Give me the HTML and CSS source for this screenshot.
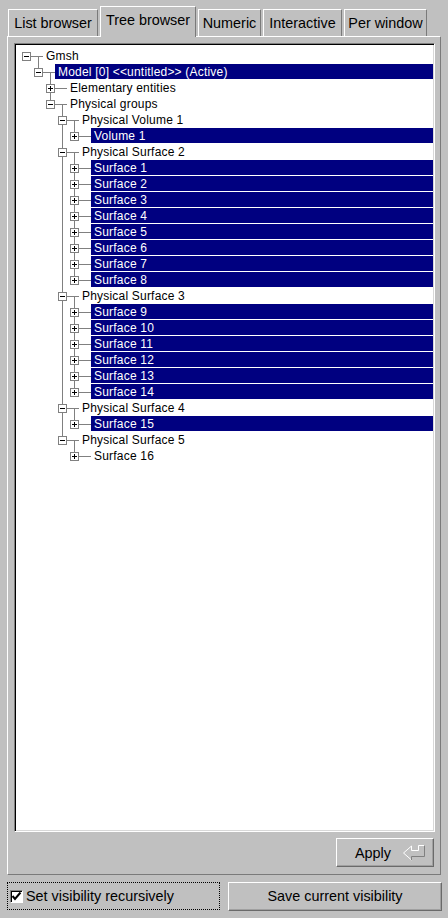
FILE: index.html
```html
<!DOCTYPE html>
<html>
<head>
<meta charset="utf-8">
<link rel="stylesheet" href="styles.css">
</head>
<body>
<div class="win">
  <div class="tabbar">
    <div class="tab t1">List browser</div>
    <div class="tab t2 active">Tree browser</div>
    <div class="tab t3">Numeric</div>
    <div class="tab t4">Interactive</div>
    <div class="tab t5">Per window</div>
  </div>
  <div class="panel">
    <div class="treebox">
      <ul class="tree">
        <li class="last">
          <div class="row open"><span class="tog minus"></span><span class="hl"></span><span class="lbl">Gmsh</span></div>
          <ul>
            <li class="last">
              <div class="row open"><span class="tog minus"></span><span class="hl"></span><span class="lbl sel">Model [0] &lt;&lt;untitled&gt;&gt; (Active)</span></div>
              <ul>
                <li>
                  <div class="row"><span class="tog plus"></span><span class="hl"></span><span class="lbl">Elementary entities</span></div>
                </li>
                <li class="last">
                  <div class="row open"><span class="tog minus"></span><span class="hl"></span><span class="lbl">Physical groups</span></div>
                  <ul>
                    <li>
                      <div class="row open"><span class="tog minus"></span><span class="hl"></span><span class="lbl">Physical Volume 1</span></div>
                      <ul>
                        <li class="last"><div class="row"><span class="tog plus"></span><span class="hl"></span><span class="lbl sel">Volume 1</span></div></li>
                      </ul>
                    </li>
                    <li>
                      <div class="row open"><span class="tog minus"></span><span class="hl"></span><span class="lbl">Physical Surface 2</span></div>
                      <ul>
                        <li><div class="row"><span class="tog plus"></span><span class="hl"></span><span class="lbl sel">Surface 1</span></div></li>
                        <li><div class="row"><span class="tog plus"></span><span class="hl"></span><span class="lbl sel">Surface 2</span></div></li>
                        <li><div class="row"><span class="tog plus"></span><span class="hl"></span><span class="lbl sel">Surface 3</span></div></li>
                        <li><div class="row"><span class="tog plus"></span><span class="hl"></span><span class="lbl sel">Surface 4</span></div></li>
                        <li><div class="row"><span class="tog plus"></span><span class="hl"></span><span class="lbl sel">Surface 5</span></div></li>
                        <li><div class="row"><span class="tog plus"></span><span class="hl"></span><span class="lbl sel">Surface 6</span></div></li>
                        <li><div class="row"><span class="tog plus"></span><span class="hl"></span><span class="lbl sel">Surface 7</span></div></li>
                        <li class="last"><div class="row"><span class="tog plus"></span><span class="hl"></span><span class="lbl sel">Surface 8</span></div></li>
                      </ul>
                    </li>
                    <li>
                      <div class="row open"><span class="tog minus"></span><span class="hl"></span><span class="lbl">Physical Surface 3</span></div>
                      <ul>
                        <li><div class="row"><span class="tog plus"></span><span class="hl"></span><span class="lbl sel">Surface 9</span></div></li>
                        <li><div class="row"><span class="tog plus"></span><span class="hl"></span><span class="lbl sel">Surface 10</span></div></li>
                        <li><div class="row"><span class="tog plus"></span><span class="hl"></span><span class="lbl sel">Surface 11</span></div></li>
                        <li><div class="row"><span class="tog plus"></span><span class="hl"></span><span class="lbl sel">Surface 12</span></div></li>
                        <li><div class="row"><span class="tog plus"></span><span class="hl"></span><span class="lbl sel">Surface 13</span></div></li>
                        <li class="last"><div class="row"><span class="tog plus"></span><span class="hl"></span><span class="lbl sel">Surface 14</span></div></li>
                      </ul>
                    </li>
                    <li>
                      <div class="row open"><span class="tog minus"></span><span class="hl"></span><span class="lbl">Physical Surface 4</span></div>
                      <ul>
                        <li class="last"><div class="row"><span class="tog plus"></span><span class="hl"></span><span class="lbl sel">Surface 15</span></div></li>
                      </ul>
                    </li>
                    <li class="last">
                      <div class="row open"><span class="tog minus"></span><span class="hl"></span><span class="lbl">Physical Surface 5</span></div>
                      <ul>
                        <li class="last"><div class="row"><span class="tog plus"></span><span class="hl"></span><span class="lbl">Surface 16</span></div></li>
                      </ul>
                    </li>
                  </ul>
                </li>
              </ul>
            </li>
          </ul>
        </li>
      </ul>
    </div>
    <div class="applyrow">
      <div class="btn apply"><span>Apply</span>
        <svg class="ret" width="24" height="17" viewBox="0 0 24 17">
          <polyline points="9.5,16 1.5,9 9.5,2 9.5,6.5 16.5,6.5 16.5,1.5 22.5,1.5" fill="none" stroke="#ffffff" stroke-width="1"/>
          <polyline points="22.5,1.5 22.5,12.5 9.5,12.5 9.5,16" fill="none" stroke="#808080" stroke-width="1"/>
        </svg>
      </div>
    </div>
  </div>
  <div class="bottom">
    <div class="chk"><span class="cbox"><svg width="11" height="11" viewBox="0 0 11 11"><polyline points="1.5,5 4,8 9.5,1.5" fill="none" stroke="#000" stroke-width="2"/></svg></span><span>Set visibility recursively</span></div>
    <div class="btn save">Save current visibility</div>
  </div>
</div>
</body>
</html>
```

FILE: styles.css
```css
html, body {
  margin: 0;
  padding: 0;
  background: #c0c0c0;
}
.win {
  width: 448px;
  height: 918px;
  overflow: hidden;
  font-family: "Liberation Sans", Arial, sans-serif;
  font-size: 14.4px;
  color: #000;
}
.tabbar {
  display: flex;
  align-items: flex-end;
  height: 36px;
  padding-left: 8px;
  gap: 2px;
  box-sizing: border-box;
}
.tab {
  box-sizing: border-box;
  height: 27px;
  line-height: 26px;
  text-align: center;
  white-space: nowrap;
  border-left: 1px solid #ffffff;
  border-top: 1px solid #ffffff;
  border-right: 1px solid #7a7a7a;
  background: #c0c0c0;
}
.t1 { width: 90px; }
.t2 { width: 96px; }
.t3 { width: 63px; }
.t4 { width: 79px; }
.t5 { width: 83px; }
.tab.active {
  height: 31px;
  line-height: 27px;
  margin-bottom: -1px;
  position: relative;
  z-index: 1;
}
.panel {
  margin-left: 7px;
  width: 434px;
  height: 839px;
  box-sizing: border-box;
  border: 1px solid;
  border-color: #ffffff #7a7a7a #7a7a7a #ffffff;
  padding: 6px 0 0 6px;
}
.treebox {
  width: 421px;
  height: 789px;
  box-sizing: border-box;
  background: #ffffff;
  border: 1px solid;
  border-color: #808080 #ffffff #ffffff #808080;
  box-shadow: inset 1px 1px 0 #000000, inset -1px -1px 0 #d8d8d8;
  padding: 1px;
  overflow: hidden;
}
.tree, .tree ul {
  list-style: none;
  margin: 0;
  padding: 0;
}
.tree {
  padding: 3px 0 0 6px;
  font-size: 12px;
  letter-spacing: 0.2px;
}
.tree ul {
  padding-left: 12px;
}
.tree li {
  background: linear-gradient(#808080, #808080) no-repeat 4px 0 / 1px 100%;
}
.tree > li {
  background: none;
}
.tree li.last {
  background-size: 1px 8px;
}
.row {
  display: flex;
  height: 16px;
}
.row.open {
  background: linear-gradient(#808080, #808080) no-repeat 16px 8px / 1px 8px;
}
.tog {
  flex: none;
  width: 9px;
  height: 9px;
  margin-top: 4px;
  box-sizing: border-box;
  border: 1px solid #808080;
  background: #ffffff;
}
.tog.minus {
  background: linear-gradient(#000, #000) center / 5px 1px no-repeat, #ffffff;
}
.tog.plus {
  background: linear-gradient(#000, #000) center / 5px 1px no-repeat,
              linear-gradient(#000, #000) center / 1px 5px no-repeat, #ffffff;
}
.hl {
  flex: none;
  width: 12px;
  height: 1px;
  margin-top: 8px;
  background: #808080;
}
.lbl {
  flex: none;
  padding: 0 3px;
  height: 16px;
  line-height: 16px;
  white-space: nowrap;
}
.lbl.sel {
  flex: 1;
  background: linear-gradient(#000080, #000080) no-repeat 0 0 / 100% 15px;
  color: #ffffff;
}
.applyrow {
  display: flex;
  justify-content: flex-end;
  width: 421px;
  padding-right: 1px;
  box-sizing: border-box;
  margin-top: 6px;
}
.btn {
  box-sizing: border-box;
  border: 1px solid;
  border-color: #ffffff #6a6a6a #6a6a6a #ffffff;
  box-shadow: inset -1px -1px 0 #a0a0a0;
  background: #c0c0c0;
}
.apply {
  width: 98px;
  height: 29px;
  display: flex;
  align-items: center;
  padding-left: 18px;
  gap: 11px;
}
.ret {
  display: block;
}
.bottom {
  display: flex;
  margin-top: 7px;
  padding-left: 7px;
}
.chk {
  width: 213px;
  height: 28px;
  box-sizing: border-box;
  border: 1px dotted #000;
  display: flex;
  align-items: center;
  padding-left: 2px;
  gap: 3px;
}
.cbox {
  width: 13px;
  height: 13px;
  box-sizing: border-box;
  border: 1px solid;
  border-color: #808080 #ffffff #ffffff #808080;
  box-shadow: inset 1px 1px 0 #000;
  background: #ffffff;
  display: flex;
  align-items: center;
  justify-content: center;
}
.cbox svg {
  display: block;
}
.save {
  margin-left: 8px;
  width: 214px;
  height: 29px;
  line-height: 27px;
  text-align: center;
}
```
